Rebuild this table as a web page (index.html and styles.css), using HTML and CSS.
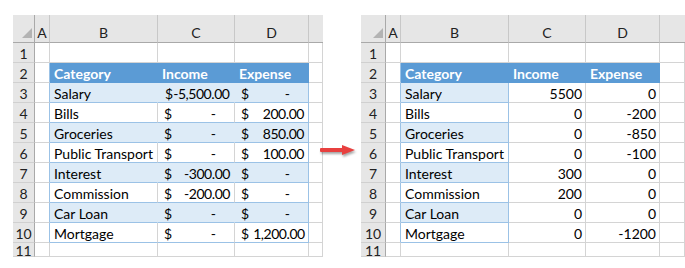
FILE: index.html
```html
<!DOCTYPE html>
<html>
<head>
<meta charset="utf-8">
<link rel="stylesheet" href="styles.css">
</head>
<body>
<div class="page">
  <div class="sheet sheet-left">
    <div class="ch corner"><svg class="tri" width="10" height="10" viewBox="0 0 10 10"><polygon points="10,0 10,10 0,10" fill="#b3b3b3"/></svg></div>
    <div class="ch">A</div><div class="ch">B</div><div class="ch">C</div><div class="ch">D</div><div class="ch last"></div>

    <div class="rh">1</div><div class="c"></div><div class="c"></div><div class="c"></div><div class="c"></div><div class="c"></div>

    <div class="rh">2</div><div class="c tl"></div><div class="c th">Category</div><div class="c th">Income</div><div class="c th">Expense</div><div class="c"></div>

    <div class="rh">3</div><div class="c tl"></div><div class="c tb band">Salary</div><div class="c tb band acc tight"><span>$</span><span class="v">-5,500.00</span></div><div class="c tb band tr acc"><span>$</span><span class="dash">-</span></div><div class="c"></div>

    <div class="rh">4</div><div class="c tl"></div><div class="c tb">Bills</div><div class="c tb acc"><span>$</span><span class="dash">-</span></div><div class="c tb tr acc"><span>$</span><span class="v">200.00</span></div><div class="c"></div>

    <div class="rh">5</div><div class="c tl"></div><div class="c tb band">Groceries</div><div class="c tb band acc"><span>$</span><span class="dash">-</span></div><div class="c tb band tr acc"><span>$</span><span class="v">850.00</span></div><div class="c"></div>

    <div class="rh">6</div><div class="c tl"></div><div class="c tb">Public Transport</div><div class="c tb acc"><span>$</span><span class="dash">-</span></div><div class="c tb tr acc"><span>$</span><span class="v">100.00</span></div><div class="c"></div>

    <div class="rh">7</div><div class="c tl"></div><div class="c tb band">Interest</div><div class="c tb band acc"><span>$</span><span class="v">-300.00</span></div><div class="c tb band tr acc"><span>$</span><span class="dash">-</span></div><div class="c"></div>

    <div class="rh">8</div><div class="c tl"></div><div class="c tb">Commission</div><div class="c tb acc"><span>$</span><span class="v">-200.00</span></div><div class="c tb tr acc"><span>$</span><span class="dash">-</span></div><div class="c"></div>

    <div class="rh">9</div><div class="c tl"></div><div class="c tb band">Car Loan</div><div class="c tb band acc"><span>$</span><span class="dash">-</span></div><div class="c tb band tr acc"><span>$</span><span class="dash">-</span></div><div class="c"></div>

    <div class="rh">10</div><div class="c tl"></div><div class="c tb">Mortgage</div><div class="c tb acc"><span>$</span><span class="dash">-</span></div><div class="c tb tr acc"><span>$</span><span class="v">1,200.00</span></div><div class="c"></div>

    <div class="rh">11</div><div class="c"></div><div class="c"></div><div class="c"></div><div class="c"></div><div class="c"></div>
  </div>

  <svg class="arrow" width="36" height="14" viewBox="0 0 36 14"><rect x="0" y="5" width="24" height="4" rx="1" fill="#e8403f"/><polygon points="22,2 35,7 22,12" fill="#e8403f"/></svg>

  <div class="sheet sheet-right">
    <div class="ch corner"><svg class="tri" width="10" height="10" viewBox="0 0 10 10"><polygon points="10,0 10,10 0,10" fill="#b3b3b3"/></svg></div>
    <div class="ch">A</div><div class="ch">B</div><div class="ch">C</div><div class="ch">D</div><div class="ch last"></div>

    <div class="rh">1</div><div class="c"></div><div class="c"></div><div class="c"></div><div class="c"></div><div class="c"></div>

    <div class="rh">2</div><div class="c tl"></div><div class="c th">Category</div><div class="c th">Income</div><div class="c th">Expense</div><div class="c"></div>

    <div class="rh">3</div><div class="c tl"></div><div class="c tb band tr">Salary</div><div class="c num">5500</div><div class="c num">0</div><div class="c"></div>
    <div class="rh">4</div><div class="c tl"></div><div class="c tb tr">Bills</div><div class="c num">0</div><div class="c num">-200</div><div class="c"></div>
    <div class="rh">5</div><div class="c tl"></div><div class="c tb band tr">Groceries</div><div class="c num">0</div><div class="c num">-850</div><div class="c"></div>
    <div class="rh">6</div><div class="c tl"></div><div class="c tb tr">Public Transport</div><div class="c num">0</div><div class="c num">-100</div><div class="c"></div>
    <div class="rh">7</div><div class="c tl"></div><div class="c tb band tr">Interest</div><div class="c num">300</div><div class="c num">0</div><div class="c"></div>
    <div class="rh">8</div><div class="c tl"></div><div class="c tb tr">Commission</div><div class="c num">200</div><div class="c num">0</div><div class="c"></div>
    <div class="rh">9</div><div class="c tl"></div><div class="c tb band tr">Car Loan</div><div class="c num">0</div><div class="c num">0</div><div class="c"></div>
    <div class="rh">10</div><div class="c tl"></div><div class="c tb tr">Mortgage</div><div class="c num">0</div><div class="c num">-1200</div><div class="c"></div>

    <div class="rh">11</div><div class="c"></div><div class="c"></div><div class="c"></div><div class="c"></div><div class="c"></div>
  </div>
</div>
</body>
</html>
```

FILE: styles.css
```css
html, body {
  margin: 0;
  padding: 0;
  background: #ffffff;
}

.page {
  display: flex;
  align-items: flex-start;
  padding: 15px 0 0 13px;
  font-family: "Lato", "Liberation Sans", sans-serif;
  font-size: 14px;
  color: #000;
}

.sheet {
  display: grid;
  grid-template-rows: 28px repeat(10, 20px) 14px;
  overflow: hidden;
}

.sheet-left {
  grid-template-columns: 22px 15px 108px 77px 74px 14px;
}

.sheet-right {
  grid-template-columns: 25px 15px 108px 77px 74px 25px;
}

.arrow {
  margin: 128px 5px 0 -3px;
  filter: drop-shadow(1px 2px 1px rgba(0, 0, 0, 0.35));
}

.sheet > div {
  box-sizing: border-box;
  white-space: nowrap;
  overflow: hidden;
}

.ch {
  background: #e6e6e6;
  border-right: 1px solid #c8c8c8;
  border-bottom: 1px solid #a9a9a9;
  display: flex;
  align-items: center;
  justify-content: center;
  padding-top: 7px;
  color: #222;
}

.ch.last {
  border-right: none;
}

.corner {
  position: relative;
  border-right: 1px solid #a9a9a9;
}

.tri {
  position: absolute;
  right: 2px;
  bottom: 4px;
}

.rh {
  background: #e6e6e6;
  border-right: 1px solid #a9a9a9;
  border-bottom: 1px solid #d0d0d0;
  display: flex;
  align-items: center;
  justify-content: center;
  padding-top: 1px;
  color: #222;
}

.c {
  border-right: 1px solid #d4d4d4;
  border-bottom: 1px solid #d4d4d4;
  display: flex;
  align-items: center;
  padding: 1px 3px 0 4px;
}

.tl {
  border-right-color: #9bc2e6;
}

.th {
  background: #5b9bd5;
  color: #ffffff;
  font-weight: bold;
  border-right-color: #5b9bd5;
  border-bottom-color: #5b9bd5;
}

.tb {
  border-bottom-color: #9bc2e6;
}

.band {
  background: #ddebf7;
  border-right-color: #ddebf7;
}

.tr {
  border-right-color: #9bc2e6;
}

.acc {
  justify-content: space-between;
  gap: 4px;
  padding-left: 6px;
  padding-right: 4px;
}

.acc.tight {
  gap: 0;
  padding-left: 7px;
  padding-right: 5px;
}

.v {
  letter-spacing: -0.45px;
}

.dash {
  padding-right: 14px;
}

.num {
  justify-content: flex-end;
  padding-right: 3px;
}
```
